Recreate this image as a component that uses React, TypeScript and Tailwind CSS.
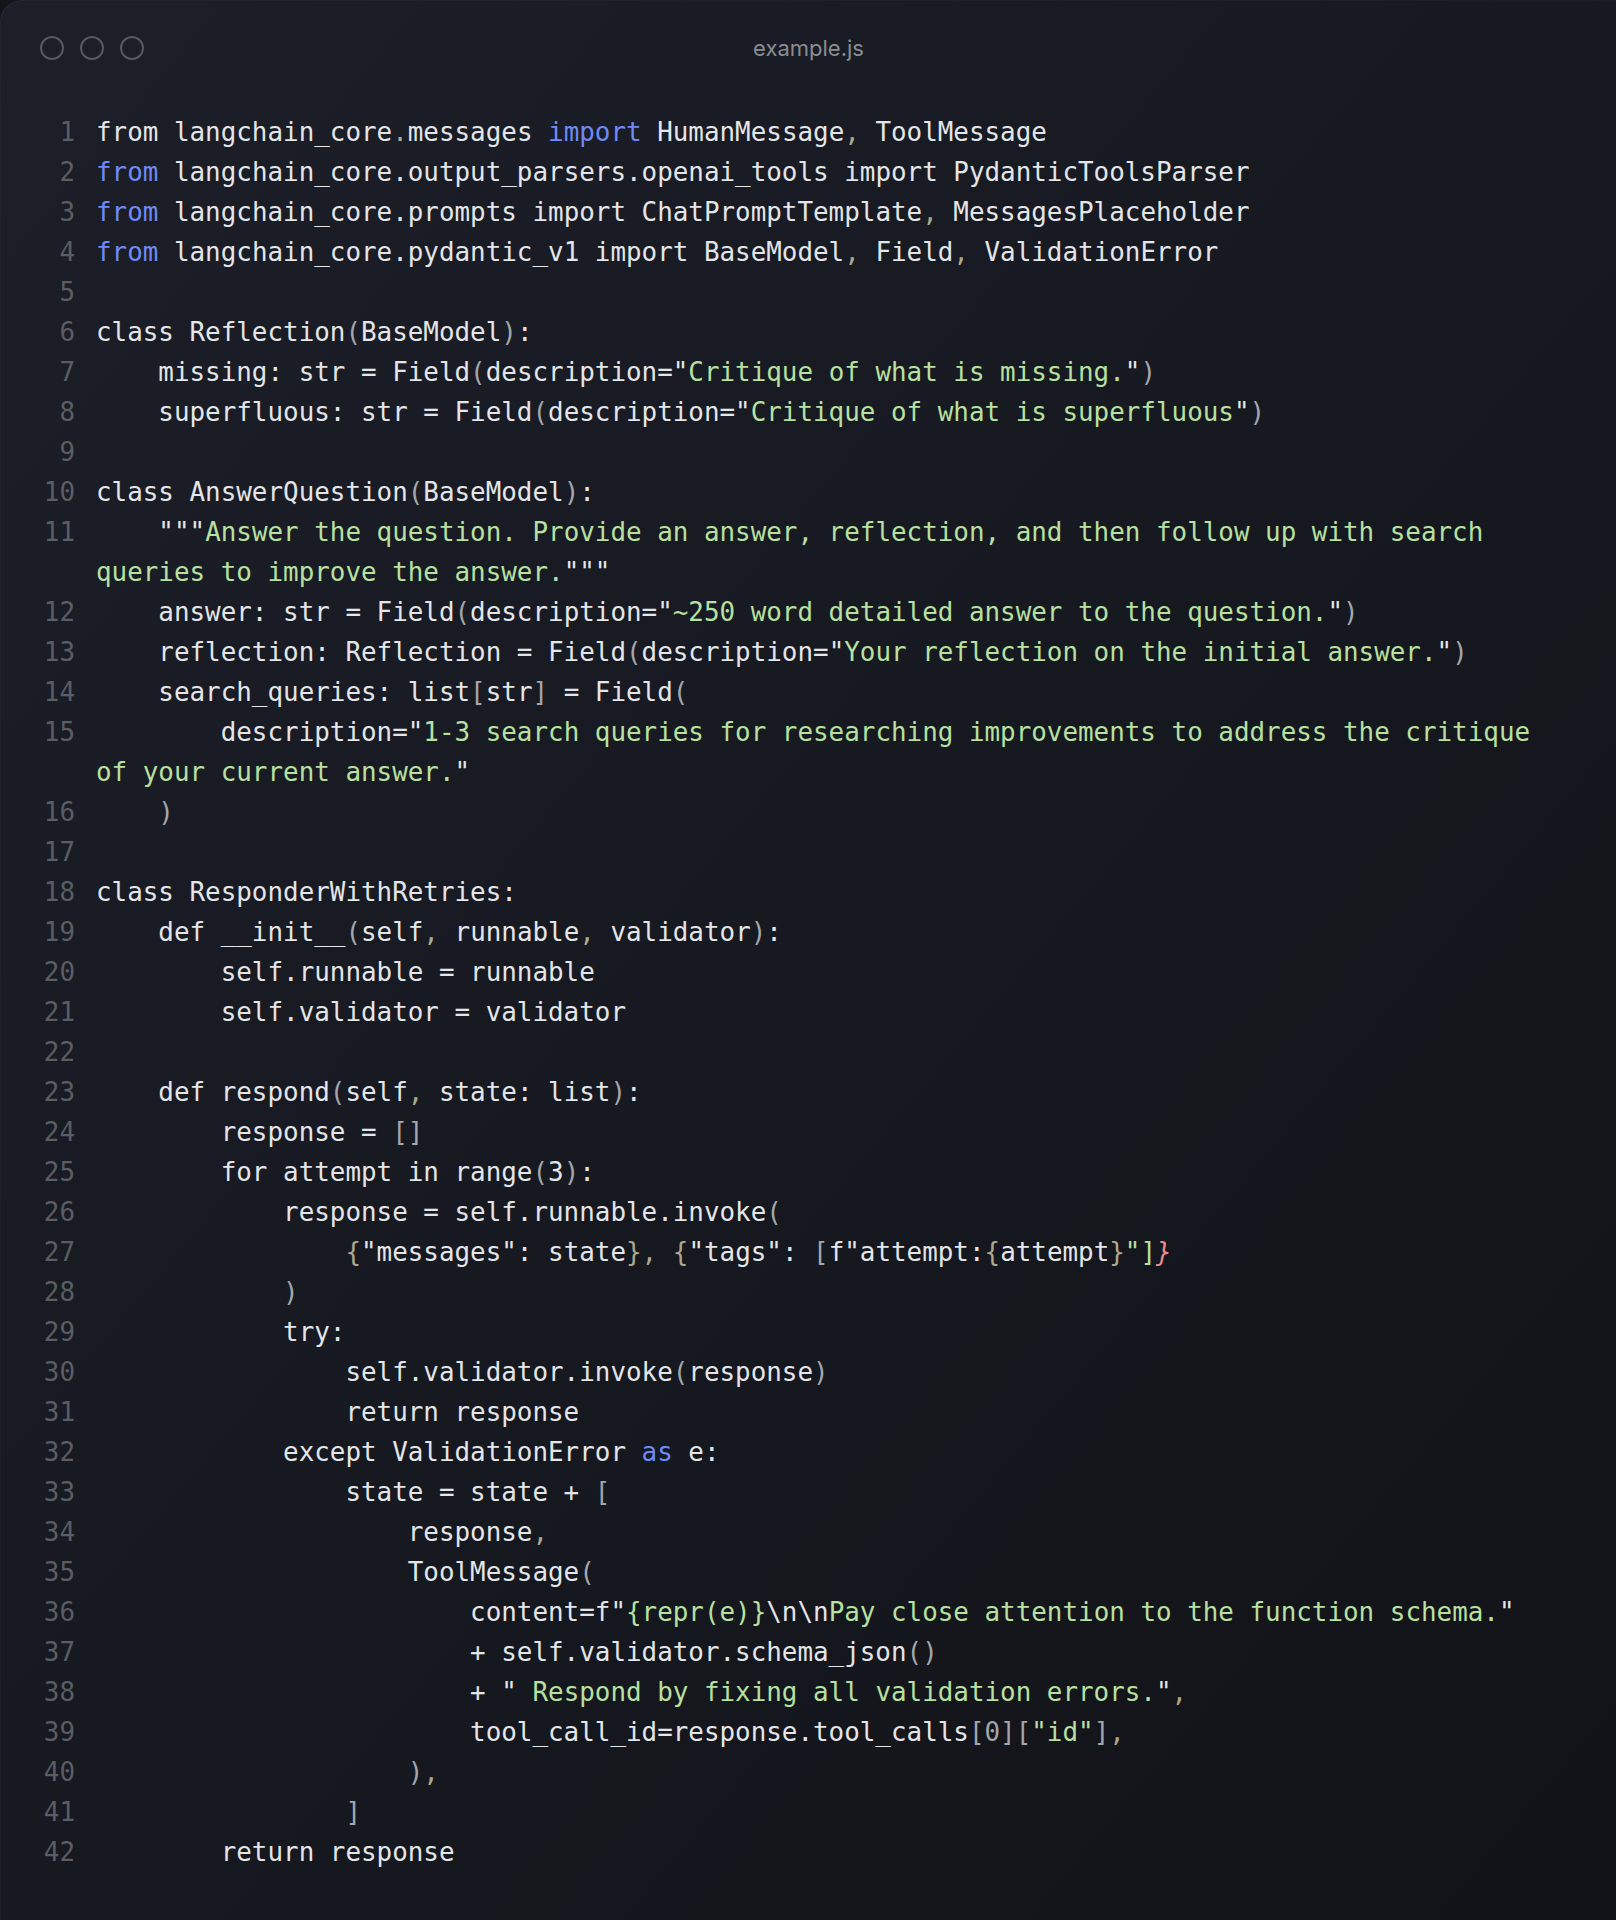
type Tok = [string, string];

// token colours
const colors: Record<string, string> = {
  t: "text-[#e4e5e8]",
  k: "text-[#6f8af6]",
  s: "text-[#b8e0a0]",
  p: "text-[#a3a6ab]",
  c: "text-[#b0a88c]",
  r: "text-[#f08a8a] italic",
};

// null number = wrapped continuation row
const lines: { n: number | null; toks: Tok[] }[] = [
  { n: 1, toks: [["t", "from langchain_core"], ["c", "."], ["t", "messages "], ["k", "import"], ["t", " HumanMessage"], ["c", ","], ["t", " ToolMessage"]] },
  { n: 2, toks: [["k", "from"], ["t", " langchain_core.output_parsers.openai_tools import PydanticToolsParser"]] },
  { n: 3, toks: [["k", "from"], ["t", " langchain_core.prompts import ChatPromptTemplate"], ["c", ","], ["t", " MessagesPlaceholder"]] },
  { n: 4, toks: [["k", "from"], ["t", " langchain_core.pydantic_v1 import BaseModel"], ["c", ","], ["t", " Field"], ["c", ","], ["t", " ValidationError"]] },
  { n: 5, toks: [] },
  { n: 6, toks: [["t", "class Reflection"], ["p", "("], ["t", "BaseModel"], ["p", ")"], ["t", ":"]] },
  { n: 7, toks: [["t", "    missing: str = Field"], ["p", "("], ["t", "description=\""], ["s", "Critique of what is missing."], ["t", "\""], ["p", ")"]] },
  { n: 8, toks: [["t", "    superfluous: str = Field"], ["p", "("], ["t", "description=\""], ["s", "Critique of what is superfluous"], ["t", "\""], ["p", ")"]] },
  { n: 9, toks: [] },
  { n: 10, toks: [["t", "class AnswerQuestion"], ["p", "("], ["t", "BaseModel"], ["p", ")"], ["t", ":"]] },
  { n: 11, toks: [["t", "    \"\"\""], ["s", "Answer the question. Provide an answer, reflection, and then follow up with search"]] },
  { n: null, toks: [["s", "queries to improve the answer."], ["t", "\"\"\""]] },
  { n: 12, toks: [["t", "    answer: str = Field"], ["p", "("], ["t", "description=\""], ["s", "~250 word detailed answer to the question."], ["t", "\""], ["p", ")"]] },
  { n: 13, toks: [["t", "    reflection: Reflection = Field"], ["p", "("], ["t", "description=\""], ["s", "Your reflection on the initial answer."], ["t", "\""], ["p", ")"]] },
  { n: 14, toks: [["t", "    search_queries: list"], ["p", "["], ["t", "str"], ["p", "]"], ["t", " = Field"], ["p", "("]] },
  { n: 15, toks: [["t", "        description=\""], ["s", "1-3 search queries for researching improvements to address the critique"]] },
  { n: null, toks: [["s", "of your current answer."], ["t", "\""]] },
  { n: 16, toks: [["t", "    "], ["p", ")"]] },
  { n: 17, toks: [] },
  { n: 18, toks: [["t", "class ResponderWithRetries:"]] },
  { n: 19, toks: [["t", "    def __init__"], ["p", "("], ["t", "self"], ["c", ","], ["t", " runnable"], ["c", ","], ["t", " validator"], ["p", ")"], ["t", ":"]] },
  { n: 20, toks: [["t", "        self.runnable = runnable"]] },
  { n: 21, toks: [["t", "        self.validator = validator"]] },
  { n: 22, toks: [] },
  { n: 23, toks: [["t", "    def respond"], ["p", "("], ["t", "self"], ["c", ","], ["t", " state: list"], ["p", ")"], ["t", ":"]] },
  { n: 24, toks: [["t", "        response = "], ["p", "[]"]] },
  { n: 25, toks: [["t", "        for attempt in range"], ["p", "("], ["t", "3"], ["p", ")"], ["t", ":"]] },
  { n: 26, toks: [["t", "            response = self.runnable.invoke"], ["p", "("]] },
  { n: 27, toks: [["t", "                "], ["c", "{"], ["t", "\"messages\": state"], ["c", "},"], ["t", " "], ["c", "{"], ["t", "\"tags\": "], ["p", "["], ["t", "f\"attempt:"], ["c", "{"], ["t", "attempt"], ["c", "}"], ["s", "\"]"], ["r", "}"]] },
  { n: 28, toks: [["t", "            "], ["p", ")"]] },
  { n: 29, toks: [["t", "            try:"]] },
  { n: 30, toks: [["t", "                self.validator.invoke"], ["p", "("], ["t", "response"], ["p", ")"]] },
  { n: 31, toks: [["t", "                return response"]] },
  { n: 32, toks: [["t", "            except ValidationError "], ["k", "as"], ["t", " e:"]] },
  { n: 33, toks: [["t", "                state = state + "], ["p", "["]] },
  { n: 34, toks: [["t", "                    response"], ["c", ","]] },
  { n: 35, toks: [["t", "                    ToolMessage"], ["p", "("]] },
  { n: 36, toks: [["t", "                        content=f\""], ["s", "{repr(e)}"], ["t", "\\n\\n"], ["s", "Pay close attention to the function schema."], ["t", "\""]] },
  { n: 37, toks: [["t", "                        + self.validator.schema_json"], ["p", "()"]] },
  { n: 38, toks: [["t", "                        + \""], ["s", " Respond by fixing all validation errors."], ["t", "\""], ["c", ","]] },
  { n: 39, toks: [["t", "                        tool_call_id=response.tool_calls"], ["p", "[0]["], ["s", "\"id\""], ["p", "]"], ["c", ","]] },
  { n: 40, toks: [["t", "                    "], ["p", ")"], ["c", ","]] },
  { n: 41, toks: [["t", "                "], ["p", "]"]] },
  { n: 42, toks: [["t", "        return response"]] },
];

const Dot = () => (
  <div className="w-[24px] h-[24px] rounded-full border-2 border-[#55585e]" />
);

const App = () => {
  return (
    <div className="w-[1616px] h-[1920px] overflow-hidden bg-[#121418]">
      <div className="w-full h-full rounded-tl-[22px] border-l border-t border-white/5 bg-linear-to-br from-[#1c1f28] via-[#161920] to-[#121318]">
        {/* title bar */}
        <div className="relative mt-[34px] h-[26px] flex items-center">
          <div className="flex gap-[16px] pl-[39px]">
            <Dot />
            <Dot />
            <Dot />
          </div>
          <div
            className="absolute left-0 right-0 text-center text-[22px] leading-[26px] text-[#8a8d92]"
            style={{ fontFamily: "Inter, 'Noto Sans', sans-serif" }}
          >
            example.js
          </div>
        </div>

        {/* code */}
        <div
          className="mt-[51px] text-[25.9px] leading-[40px]"
          style={{ fontFamily: "'DejaVu Sans Mono', 'Liberation Mono', monospace" }}
        >
          {lines.map((line, i) => (
            <div key={i} className="flex h-[40px]">
              <div className="w-[74px] shrink-0 text-right text-[#5a5d63]">
                {line.n ?? ""}
              </div>
              <div className="ml-[21px] whitespace-pre">
                {line.toks.map(([type, text], j) => (
                  <span key={j} className={colors[type]}>
                    {text}
                  </span>
                ))}
              </div>
            </div>
          ))}
        </div>
      </div>
    </div>
  );
};

export default App;
